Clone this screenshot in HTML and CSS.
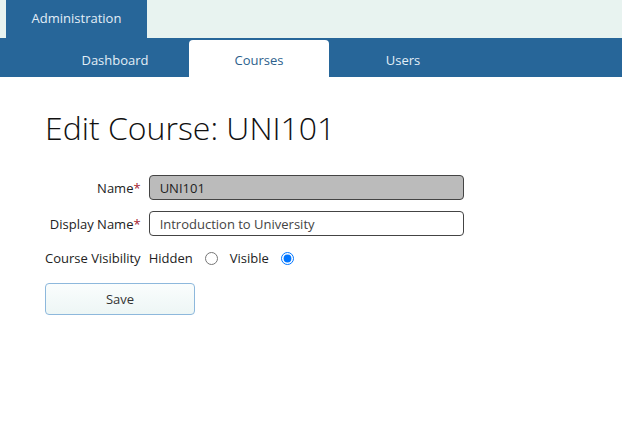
FILE: index.html
```html
<!DOCTYPE html>
<html>
<head>
<meta charset="utf-8">
<link rel="stylesheet" href="styles.css">
</head>
<body>
<div class="topbar">
  <div class="admin-tab">Administration</div>
</div>
<nav class="nav">
  <a class="tab">Dashboard</a>
  <a class="tab active">Courses</a>
  <a class="tab">Users</a>
</nav>
<main class="content">
  <h1 class="title">Edit Course: UNI101</h1>
  <form class="form">
    <label class="label">Name<span class="req">*</span></label>
    <input class="input readonly" type="text" value="UNI101" readonly>
    <label class="label">Display Name<span class="req">*</span></label>
    <input class="input" type="text" value="Introduction to University">
    <label class="label">Course Visibility</label>
    <div class="radios">
      <span>Hidden</span><input class="radio" type="radio" name="vis">
      <span>Visible</span><input class="radio" type="radio" name="vis" checked>
    </div>
  </form>
  <button class="save" type="button">Save</button>
</main>
</body>
</html>
```
FILE: styles.css
```css
* { box-sizing: border-box; }
body {
  margin: 0;
  font-family: "Open Sans", "Liberation Sans", sans-serif;
  font-size: 13px;
  color: #222;
  background: #fff;
}
.topbar {
  height: 38px;
  background: #e8f3f0;
  padding-left: 6px;
  display: flex;
}
.admin-tab {
  width: 141px;
  background: #276699;
  color: #e3eef7;
  display: flex;
  align-items: center;
  justify-content: center;
  padding-bottom: 2px;
}
.nav {
  height: 39px;
  background: #276699;
  padding-left: 45px;
  display: flex;
  align-items: flex-end;
  gap: 4px;
}
.tab {
  width: 140px;
  height: 37px;
  display: flex;
  align-items: center;
  justify-content: center;
  color: #e3eef7;
  padding-top: 2px;
}
.tab.active {
  background: #fff;
  color: #2d5f8c;
  border-radius: 4px 4px 0 0;
}
.content {
  padding: 0 45px;
}
.title {
  margin: 29px 0 0 0;
  font-size: 32px;
  font-weight: 300;
  color: #111;
  line-height: 43px;
}
.form {
  margin-top: 26px;
  display: grid;
  grid-template-columns: auto 315px;
  justify-content: start;
  column-gap: 8px;
  row-gap: 11px;
  align-items: center;
}
.label {
  text-align: right;
  color: #222;
}
.req { color: #a3192e; }
.input {
  height: 25px;
  border: 1px solid #444;
  border-radius: 4px;
  padding: 0 10px;
  font-family: inherit;
  font-size: 13px;
  color: #444;
  background: #fff;
}
.input.readonly {
  background: #bbbbbb;
  color: #222;
}
.radios {
  display: flex;
  align-items: center;
  gap: 12px;
  height: 22px;
  color: #222;
}
.radio {
  margin: 0;
  width: 13px;
  height: 13px;
}
.save {
  margin-top: 14px;
  width: 150px;
  height: 32px;
  border: 1px solid #8db8dc;
  border-radius: 4px;
  background: linear-gradient(#fafdfd, #edf6f5);
  font-family: inherit;
  font-size: 13px;
  color: #333;
}
```
